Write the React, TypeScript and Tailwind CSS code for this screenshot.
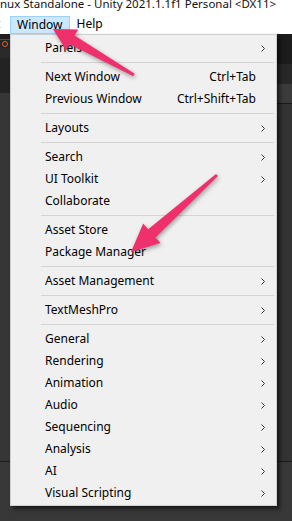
type Row = { label: string; shortcut?: string; sub?: boolean } | "sep";

const rows: Row[] = [
  { label: "Panels", sub: true },
  "sep",
  { label: "Next Window", shortcut: "Ctrl+Tab" },
  { label: "Previous Window", shortcut: "Ctrl+Shift+Tab" },
  "sep",
  { label: "Layouts", sub: true },
  "sep",
  { label: "Search", sub: true },
  { label: "UI Toolkit", sub: true },
  { label: "Collaborate" },
  "sep",
  { label: "Asset Store" },
  { label: "Package Manager" },
  "sep",
  { label: "Asset Management", sub: true },
  "sep",
  { label: "TextMeshPro", sub: true },
  "sep",
  { label: "General", sub: true },
  { label: "Rendering", sub: true },
  { label: "Animation", sub: true },
  { label: "Audio", sub: true },
  { label: "Sequencing", sub: true },
  { label: "Analysis", sub: true },
  { label: "AI", sub: true },
  { label: "Visual Scripting", sub: true },
];

const font = { fontFamily: '"Noto Sans", "Open Sans", sans-serif' };

function Chevron() {
  return (
    <svg width="4" height="7" viewBox="0 0 4 7" className="shrink-0">
      <polyline points="0.5,0.5 3.5,3.5 0.5,6.5" fill="none" stroke="#333" strokeWidth="1" />
    </svg>
  );
}

// tapered screenshot arrow, tip -> tail
function arrowPoints(tip: [number, number], tail: [number, number], headLen: number, headHalf: number, shaftHalf: number, tailHalf: number) {
  const dx = tail[0] - tip[0];
  const dy = tail[1] - tip[1];
  const len = Math.hypot(dx, dy);
  const ux = dx / len;
  const uy = dy / len;
  const px = -uy;
  const py = ux;
  const bx = tip[0] + ux * headLen;
  const by = tip[1] + uy * headLen;
  const pts = [
    [tip[0], tip[1]],
    [bx + px * headHalf, by + py * headHalf],
    [bx + px * shaftHalf, by + py * shaftHalf],
    [tail[0] + px * tailHalf, tail[1] + py * tailHalf],
    [tail[0] - px * tailHalf, tail[1] - py * tailHalf],
    [bx - px * shaftHalf, by - py * shaftHalf],
    [bx - px * headHalf, by - py * headHalf],
  ];
  return pts.map((p) => p.map((n) => n.toFixed(1)).join(",")).join(" ");
}

export default function App() {
  return (
    <div className="relative w-[292px] h-[521px] overflow-hidden bg-[#383838] text-[12px] text-black" style={font}>
      {/* title bar */}
      <div className="h-[14px] bg-white overflow-hidden">
        <div className="mt-[-4px] leading-[16px] whitespace-nowrap text-[#111] text-[11.5px]">nux Standalone - Unity 2021.1.1f1 Personal &lt;DX11&gt;</div>
      </div>

      {/* menu bar */}
      <div className="h-[20px] bg-white flex items-center whitespace-nowrap">
        <span className="ml-[-4px] w-[14px] leading-[16px]">t</span>
        <div className="h-[18px] mt-[1px] px-[6px] flex items-center bg-[#cce8ff] border border-[#99d1ff]">Window</div>
        <span className="ml-[7px]">Help</span>
      </div>

      {/* editor behind the menu */}
      <div className="flex h-[487px]">
        <div className="w-[10px] flex flex-col">
          <div className="h-[5px] bg-[#1e1e1e]" />
          <div className="h-[1px] bg-[#4a4a4a]" />
          <div className="h-[8px] bg-[#262626] relative overflow-hidden">
            <div className="absolute left-[2px] top-[1px] w-[6px] h-[6px] rounded-full border border-[#e0602a]" />
          </div>
          <div className="h-[10px] bg-[#2a2a2a]" />
          <div className="h-[35px] bg-[#232323]" />
          <div className="h-[368px] bg-[#363636]" />
          <div className="h-[1px] bg-[#1c1c1c]" />
          <div className="flex-1 bg-[#383838]" />
        </div>
        <div className="flex-1 bg-[#383838]" />
        <div className="w-[15px] flex flex-col">
          <div className="h-[30px] bg-[#1c1c1c]" />
          <div className="h-[20px] bg-[#282828]" />
          <div className="h-[19px] bg-[#3b3b3b]" />
          <div className="h-[1px] bg-[#1a1a1a]" />
          <div className="h-[357px] bg-[#333333]" />
          <div className="h-[1px] bg-[#1c1c1c]" />
          <div className="flex-1 bg-[#383838]" />
        </div>
      </div>

      {/* dropdown */}
      <div className="absolute left-[10px] top-[34px] w-[267px] h-[472px] bg-[#f0f0f0] border border-[#cfcfcf] shadow-[3px_3px_4px_rgba(0,0,0,0.55)] pt-[2px]">
        {rows.map((r, i) =>
          r === "sep" ? (
            <div key={i} className="h-[7px] flex items-center">
              <div className="ml-[30px] mr-[2px] flex-1 h-[1px] bg-[#d4d4d4]" />
            </div>
          ) : (
            <div key={i} className="h-[22px] flex items-center pl-[34px] pr-[11px] whitespace-nowrap">
              <span className="flex-1">{r.label}</span>
              {r.shortcut && <span className="mr-[5px]">{r.shortcut}</span>}
              {r.sub ? <Chevron /> : <span className="w-[4px]" />}
            </div>
          )
        )}
      </div>

      {/* annotation arrows */}
      <svg className="absolute left-0 top-0 drop-shadow-[1px_2px_2px_rgba(0,0,0,0.35)]" width="292" height="521" viewBox="0 0 292 521">
        <polygon points={arrowPoints([53, 29], [134, 75], 22, 12, 5, 1.5)} fill="#f0306d" />
        <polygon points={arrowPoints([131, 252], [217, 175], 28, 13, 5.5, 1.5)} fill="#f0306d" />
      </svg>
    </div>
  );
}
